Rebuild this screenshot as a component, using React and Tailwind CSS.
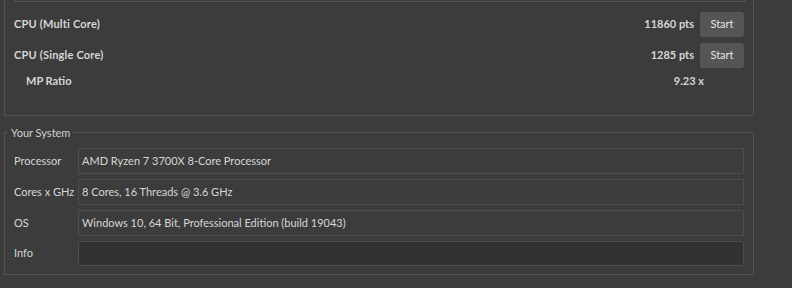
import React from 'react';

const scores = [
    { name: 'CPU (Multi Core)', value: '11860 pts' },
    { name: 'CPU (Single Core)', value: '1285 pts' },
];

const system = [
    { label: 'Processor', value: 'AMD Ryzen 7 3700X 8-Core Processor' },
    { label: 'Cores x GHz', value: '8 Cores, 16 Threads @ 3.6 GHz' },
    { label: 'OS', value: 'Windows 10, 64 Bit, Professional Edition (build 19043)' },
];

const App = () => {
    return (
        <div className="w-[792px] h-[288px] overflow-hidden bg-[#3c3c3c] text-[11px] text-[#d6d6d6] font-['Lato','Liberation_Sans',sans-serif]">
            {/* results group, scrolled so its top is out of view */}
            <div className="ml-[4px] w-[750px] border-x border-b border-[#525252] pb-[24px]">
                <div className="ml-[9px] w-[732px] h-[2px] border-x border-b border-[#525252]" />

                <div className="mt-[10px] flex flex-col gap-[6px]">
                    {scores.map((s) => (
                        <div key={s.name} className="h-[25px] flex items-center pl-[9px] pr-[9px]">
                            <span className="font-bold tracking-[0.2px]">{s.name}</span>
                            <span className="ml-auto font-bold">{s.value}</span>
                            <button className="ml-[6px] w-[44px] h-[25px] rounded-[3px] bg-[#555555] text-[#e4e4e4]">
                                Start
                            </button>
                        </div>
                    ))}
                </div>

                <div className="mt-[3px] h-[20px] flex items-center pl-[21px] pr-[49px] font-bold">
                    <span>MP Ratio</span>
                    <span className="ml-auto">9.23 x</span>
                </div>
            </div>

            <fieldset className="mt-[9px] ml-[4px] w-[750px] border border-[#525252]">
                <legend className="ml-[3px] px-[3px] leading-[15px] text-[#d0d0d0]">Your System</legend>
                <div className="mt-[8px] px-[9px] pb-[8px] flex flex-col gap-[5px]">
                    {system.map((row) => (
                        <div key={row.label} className="flex items-center">
                            <span className="w-[64px] shrink-0">{row.label}</span>
                            <div className="flex-1 h-[26px] flex items-center pl-[3px] border border-[#4e4e4e]">
                                {row.value}
                            </div>
                        </div>
                    ))}
                    <div className="flex items-center">
                        <span className="w-[64px] shrink-0">Info</span>
                        <div className="flex-1 h-[25px] rounded-[3px] border border-[#4e4e4e] bg-[#323232]" />
                    </div>
                </div>
            </fieldset>
        </div>
    );
};

export default App;
